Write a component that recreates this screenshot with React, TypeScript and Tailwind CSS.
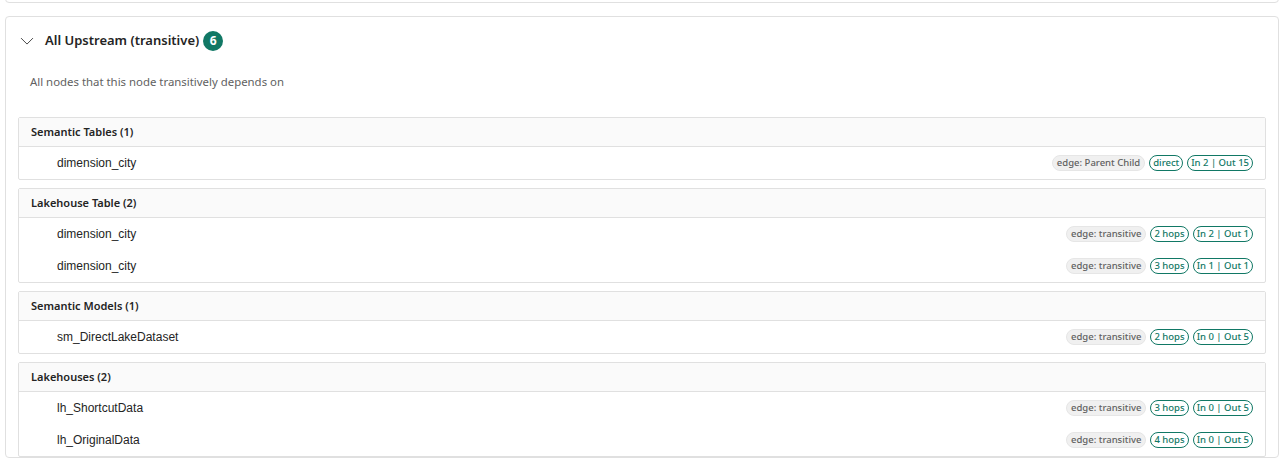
import React, { useState } from 'react';

interface DepItem {
  name: string;
  edge: string;
  hops: string;
  io: string;
}

interface DepGroup {
  title: string;
  items: DepItem[];
}

const groups: DepGroup[] = [
  {
    title: 'Semantic Tables (1)',
    items: [{ name: 'dimension_city', edge: 'edge: Parent Child', hops: 'direct', io: 'In 2 | Out 15' }],
  },
  {
    title: 'Lakehouse Table (2)',
    items: [
      { name: 'dimension_city', edge: 'edge: transitive', hops: '2 hops', io: 'In 2 | Out 1' },
      { name: 'dimension_city', edge: 'edge: transitive', hops: '3 hops', io: 'In 1 | Out 1' },
    ],
  },
  {
    title: 'Semantic Models (1)',
    items: [{ name: 'sm_DirectLakeDataset', edge: 'edge: transitive', hops: '2 hops', io: 'In 0 | Out 5' }],
  },
  {
    title: 'Lakehouses (2)',
    items: [
      { name: 'lh_ShortcutData', edge: 'edge: transitive', hops: '3 hops', io: 'In 0 | Out 5' },
      { name: 'lh_OriginalData', edge: 'edge: transitive', hops: '4 hops', io: 'In 0 | Out 5' },
    ],
  },
];

const uiFont = "font-['Noto_Sans',sans-serif]";

const GreenPill: React.FC<{ text: string }> = ({ text }) => (
  <span className="inline-flex h-[16px] items-center rounded-full border border-[#117865] bg-white px-[3px] text-[9.5px] font-medium leading-none text-[#117865]">
    {text}
  </span>
);

const App: React.FC = () => {
  const [open, setOpen] = useState(true);

  return (
    <div className={`min-h-[466px] bg-white px-[5px] ${uiFont}`}>
      {/* previous card, only its bottom edge shows */}
      <div className="-mt-[10px] h-[13px] rounded-b-[4px] border border-[#e0e0e0]" />

      <div className="mt-[13px] overflow-hidden rounded-[4px] border border-[#e0e0e0] px-[12px]">
        <button
          onClick={() => setOpen(!open)}
          className="flex h-[46px] items-center gap-[11px] pl-[2px] pt-[2px] text-left"
        >
          <svg width="14" height="14" viewBox="0 0 16 16" fill="none" className={open ? '' : '-rotate-90'}>
            <path d="M1.5 5 8 11.5 14.5 5" stroke="#424242" strokeWidth="1.1" strokeLinecap="round" strokeLinejoin="round" />
          </svg>
          <span className="text-[13px] font-semibold text-[#242424]">All Upstream (transitive)</span>
          <span className="-ml-[7px] flex h-[20px] w-[20px] items-center justify-center rounded-full bg-[#117865] text-[12px] font-bold text-white">
            6
          </span>
        </button>

        {open && (
          <>
            <p className="pb-[26px] pl-[12px] pt-[10px] text-[11.4px] leading-[18px] text-[#616161]">
              All nodes that this node transitively depends on
            </p>

            <div className="flex flex-col gap-[8px]">
              {groups.map((g) => (
                <div key={g.title} className="rounded-[2px] border border-[#e0e0e0]">
                  <div className="flex h-[29px] items-center border-b border-[#e0e0e0] bg-[#fafafa] pl-[12px] text-[11px] font-semibold text-[#242424]">
                    {g.title}
                  </div>
                  {g.items.map((it, i) => (
                    <div key={i} className="flex h-[32px] items-center justify-between pl-[38px] pr-[12px]">
                      <span className="font-['Liberation_Sans',Arial,sans-serif] text-[12px] text-[#242424]">
                        {it.name}
                      </span>
                      <div className="flex items-center gap-[4px]">
                        <span className="inline-flex h-[16px] items-center rounded-full border border-[#e6e6e6] bg-[#f0f0f0] px-[4px] text-[9.5px] font-medium leading-none text-[#616161]">
                          {it.edge}
                        </span>
                        <GreenPill text={it.hops} />
                        <GreenPill text={it.io} />
                      </div>
                    </div>
                  ))}
                </div>
              ))}
            </div>
          </>
        )}
      </div>
    </div>
  );
};

export default App;
